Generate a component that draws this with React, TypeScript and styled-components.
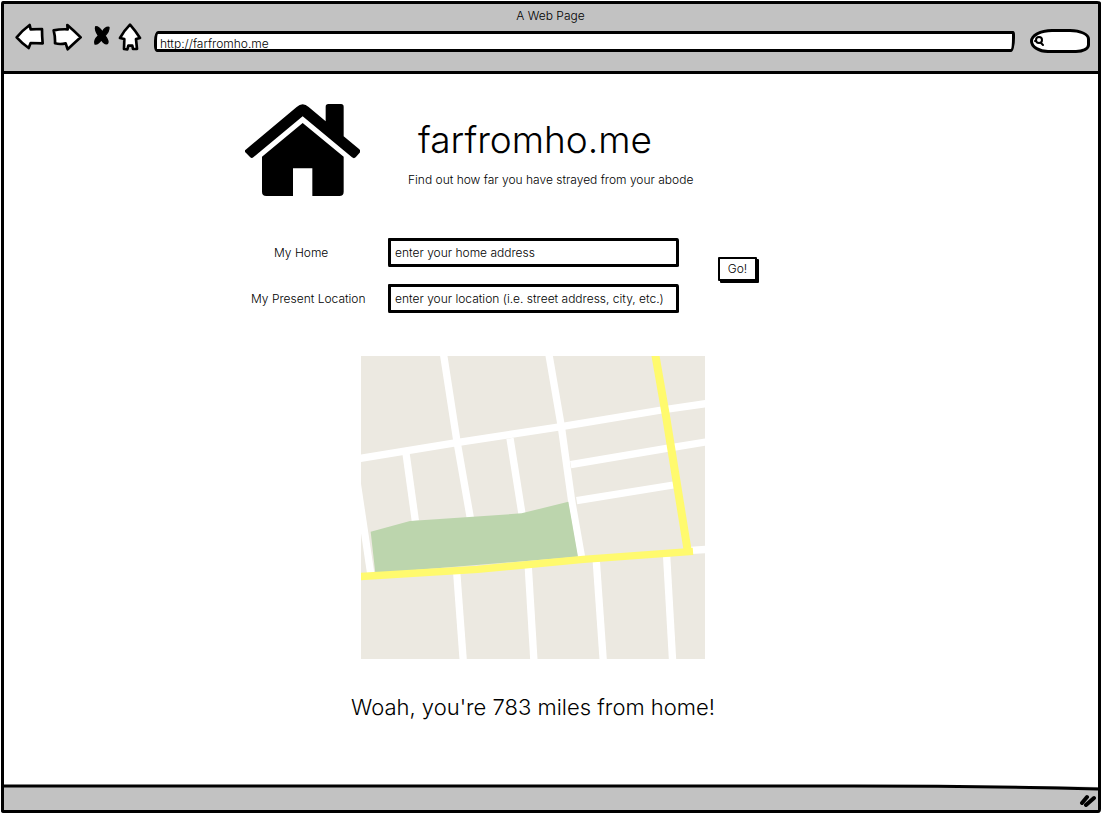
import React from "react";
import styled, { createGlobalStyle } from "styled-components";

const GlobalStyle = createGlobalStyle`
  * { box-sizing: border-box; }
  body {
    margin: 0;
    background: #fff;
    color: #000;
    font-family: Inter, "Liberation Sans", sans-serif;
    font-size: 12px;
    font-weight: 300;
    line-height: 16px;
  }
  input, button { font: inherit; color: inherit; }
`;

const ink = "#000";
const chrome = "#c2c2c2";

const Frame = styled.div`
  display: flex;
  flex-direction: column;
  min-height: 100vh;
  padding: 1px;
`;

const BrowserWindow = styled.div`
  flex: 1;
  display: flex;
  flex-direction: column;
  border: 3px solid ${ink};
  border-radius: 2px 4px 3px 3px / 3px 2px 4px 2px;
`;

const Toolbar = styled.header`
  background: ${chrome};
  border-bottom: 3px solid ${ink};
  padding: 5px 8px 18px 11px;
`;

const WindowTitle = styled.div`
  padding-right: 4px;
  line-height: 14px;
  text-align: center;
`;

const Nav = styled.nav`
  display: flex;
  align-items: flex-start;
  gap: 7px;
`;

const IconButton = styled.button`
  display: block;
  flex: none;
  padding: 0;
  border: 0;
  background: none;

  svg {
    display: block;
    height: 28px;
    fill: #fff;
    stroke: ${ink};
    stroke-width: 8;
    stroke-linejoin: round;
    stroke-linecap: round;
  }
`;

const AddressBar = styled.input`
  flex: 1;
  min-width: 0;
  height: 21px;
  margin: 8px 8px 0 5px;
  padding: 4px 3px 0;
  border: 3px solid ${ink};
  border-radius: 4px 2px 4px 3px / 10px 4px 14px 6px;
  background: #fff;
`;

const SearchBox = styled.label`
  display: flex;
  flex: none;
  align-items: center;
  width: 60px;
  height: 24px;
  margin-top: 6px;
  padding-left: 1px;
  border: 3px solid ${ink};
  border-radius: 22px 20px 14px 18px / 12px 10px 8px 12px;
  background: #fff;

  input {
    width: 36px;
    padding: 0;
    border: 0;
    outline: 0;
    background: transparent;
  }
`;

const Page = styled.main`
  flex: 1;
  width: 100%;
  max-width: 612px;
  margin: 0 auto;
  padding: 30px 0 40px;
`;

const Masthead = styled.div`
  display: flex;
  gap: 48px;
`;

const SiteTitle = styled.h1`
  margin: 12px 0 0;
  padding-left: 10px;
  font-size: 37px;
  font-weight: 300;
  line-height: 48px;
`;

const Tagline = styled.p`
  margin: 8px 0 0;
`;

const LookupForm = styled.form`
  display: flex;
  align-items: flex-start;
  gap: 39px;
  margin-top: 42px;
`;

const Fields = styled.div`
  display: grid;
  gap: 17px;
`;

const Field = styled.div`
  display: grid;
  grid-template-columns: 143px 291px;
  align-items: center;
`;

const FieldLabel = styled.label<{ $indent: number }>`
  padding-left: ${(p) => p.$indent}px;
  white-space: nowrap;
`;

const TextBox = styled.input`
  width: 100%;
  height: 29px;
  padding: 0 4px;
  border: 3px solid ${ink};
  border-radius: 1px 2px 2px 1px / 1px 3px 1px 2px;
  background: #fff;

  &::placeholder { color: ${ink}; opacity: 1; }
`;

const GoButton = styled.button`
  width: 39px;
  height: 24px;
  margin-top: 19px;
  padding: 0;
  border: 2px solid ${ink};
  border-radius: 1px;
  background: #fff;
  box-shadow: 2px 2px 0 ${ink};
`;

const Result = styled.section`
  display: flex;
  flex-direction: column;
  align-items: center;
  gap: 32px;
  max-width: 576px;
  margin-top: 43px;
`;

const Distance = styled.p`
  margin: 0;
  font-size: 22px;
  line-height: 32px;
`;

const StatusBar = styled.footer`
  position: relative;
  height: 24px;
  display: flex;
  align-items: center;
  justify-content: flex-end;
  padding: 4px 2px 0 0;
  background: ${chrome};
`;

const StatusEdge = styled.svg`
  position: absolute;
  left: 0;
  top: -2px;
  width: 100%;
  height: 8px;
`;

const HouseLogo = () => (
  <svg width="115" height="92" viewBox="43 42 345 276" role="img" aria-label="House">
    <path d="M45 179 L198 51 Q216 35 234 51 L285 94 V50 Q285 42 293 42 H331 Q339 42 339 50 V139 L386 178 Q391 183 387 188 L375 202 Q370 207 364 202 L216 79 L68 202 Q63 207 58 201 L44 187 Q40 183 45 179 Z" />
    <path d="M216 99 L339 200 V305 Q339 318 326 318 H245 V235 H187 V318 H107 Q94 318 94 305 V200 Z" />
  </svg>
);

const roads = [
  "247,-9 288,257 328,486",
  "563,-9 601,212 632,435 662,606",
  "-9,308 287,260 601,212 902,162 1041,142",
  "135,292 163,494",
  "447,247 483,474",
  "-12,377 29,652",
  "629,326 917,277 1041,257",
  "647,434 937,387",
  "990,583 1041,580",
  "287,647 307,918",
  "502,635 519,918",
  "706,617 727,918",
  "917,602 935,918",
];

const StreetMap = () => (
  <svg width="344" height="303" viewBox="0 0 1032 909" role="img" aria-label="Street map" fill="none" strokeWidth="22">
    <rect width="1032" height="909" fill="#ece9e1" />
    {roads.map((points) => (
      <polyline key={points} points={points} stroke="#fff" />
    ))}
    <polygon points="29,527 147,495 482,472 622,437 651,602 43,652" fill="#bcd5ad" />
    <polyline points="-9,662 350,640 667,610 996,586" stroke="#fffa6e" />
    <polyline points="882,-9 915,180 929,267 981,590" stroke="#fffa6e" strokeWidth="24" />
  </svg>
);

export default function App() {
  return (
    <Frame>
      <GlobalStyle />
      <BrowserWindow>
        <Toolbar>
          <WindowTitle>A Web Page</WindowTitle>
          <Nav>
            <IconButton aria-label="Back">
              <svg width="30" viewBox="45 69 90 84">
                <path d="M50 112 Q66 92 89 75 L92 88 L126 87 Q126 108 128 130 L92 129 L86 144 Q66 130 50 112 Z" />
              </svg>
            </IconButton>
            <IconButton aria-label="Forward">
              <svg width="30" viewBox="156 69 90 84">
                <path d="M161 91 Q180 87 203 88 L202 75 Q224 94 242 112 Q220 132 203 148 L197 130 Q180 134 165 130 Q166 110 161 91 Z" />
              </svg>
            </IconButton>
            <IconButton aria-label="Stop">
              <svg width="22" viewBox="267 69 66 84">
                <path
                  fill="#000"
                  strokeWidth="4"
                  d="M287 80 Q298 80 307 96 Q316 80 327 82 Q328 94 315 107 Q328 124 322 131 Q312 133 304 119 Q294 134 285 132 Q281 120 295 107 Q284 90 287 80 Z"
                />
              </svg>
            </IconButton>
            <IconButton aria-label="Home">
              <svg width="24" viewBox="354 69 72 84">
                <path d="M390 74 Q406 92 420 114 L408 117 L411 147 L399 147 L397 137 L385 137 L382 148 L372 147 L373 117 L360 114 Q372 92 390 74 Z" />
              </svg>
            </IconButton>
            <AddressBar aria-label="Address" defaultValue="http://farfromho.me" />
            <SearchBox>
              <svg width="11" height="12" viewBox="0 0 11 12" fill="none" stroke="#000" strokeWidth="2" strokeLinecap="round">
                <circle cx="5" cy="5" r="3" />
                <path d="M7 8 L9 10 M1 6 H2" />
              </svg>
              <input aria-label="Search" />
            </SearchBox>
          </Nav>
        </Toolbar>

        <Page>
          <Masthead>
            <HouseLogo />
            <div>
              <SiteTitle>farfromho.me</SiteTitle>
              <Tagline>Find out how far you have strayed from your abode</Tagline>
            </div>
          </Masthead>

          <LookupForm onSubmit={(e) => e.preventDefault()}>
            <Fields>
              <Field>
                <FieldLabel htmlFor="home" $indent={29}>My Home</FieldLabel>
                <TextBox id="home" placeholder="enter your home address" />
              </Field>
              <Field>
                <FieldLabel htmlFor="location" $indent={6}>My Present Location</FieldLabel>
                <TextBox id="location" placeholder="enter your location (i.e. street address, city, etc.)" />
              </Field>
            </Fields>
            <GoButton type="submit">Go!</GoButton>
          </LookupForm>

          <Result>
            <StreetMap />
            <Distance>Woah, you're 783 miles from home!</Distance>
          </Result>
        </Page>

        <StatusBar>
          <StatusEdge viewBox="0 0 1094 8" preserveAspectRatio="none" aria-hidden="true">
            <path d="M0 0 H950 L1094 3 V0 Z" fill="#fff" />
            <path d="M0 2 H850 Q980 2 1094 5" fill="none" stroke="#000" strokeWidth="3" />
          </StatusEdge>
          <svg width="18" height="14" viewBox="0 0 18 14" fill="none" stroke="#000" strokeWidth="4" strokeLinecap="round" aria-hidden="true">
            <path d="M4 10 L9 4 M8 12 L16 5" />
          </svg>
        </StatusBar>
      </BrowserWindow>
    </Frame>
  );
}
